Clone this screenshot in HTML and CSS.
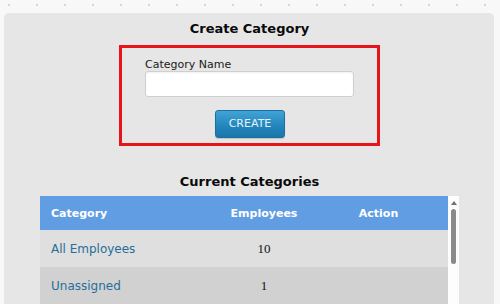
FILE: index.html
```html
<!DOCTYPE html>
<html lang="en">
<head>
<meta charset="utf-8">
<title>Create Category</title>
<link rel="stylesheet" href="styles.css">
</head>
<body>
<div class="dots"></div>
<div class="panel">
  <h2 class="title">Create Category</h2>
  <div class="form-box">
    <label class="label" for="catname">Category Name</label>
    <input class="input" id="catname" type="text">
    <div class="actions"><button class="btn" type="button">CREATE</button></div>
  </div>
  <h2 class="title sub">Current Categories</h2>
  <div class="list">
    <table class="table">
      <colgroup><col class="c1"><col class="c2"><col class="c3"></colgroup>
      <thead>
        <tr><th class="left">Category</th><th>Employees</th><th>Action</th></tr>
      </thead>
      <tbody>
        <tr class="odd"><td class="left"><a class="link" href="#">All Employees</a></td><td class="num">10</td><td></td></tr>
        <tr class="even"><td class="left"><a class="link" href="#">Unassigned</a></td><td class="num">1</td><td></td></tr>
      </tbody>
    </table>
    <div class="scrollbar">
      <div class="arrow"></div>
      <div class="thumb"></div>
    </div>
  </div>
</div>
</body>
</html>
```
FILE: styles.css
```css
html, body {
  margin: 0;
  padding: 0;
  height: 304px;
  overflow: hidden;
}
body {
  background: #f8f8f8;
  font-family: "DejaVu Sans", Verdana, sans-serif;
  color: #111;
}
.dots {
  height: 13px;
  background-image: radial-gradient(circle, #d6d6d6 0.9px, transparent 1.6px);
  background-size: 28px 10px;
  background-position: -5px 0;
  background-repeat: repeat-x;
}
.panel {
  margin-left: 4px;
  width: 490px;
  height: 291px;
  box-sizing: border-box;
  background: #e6e6e6;
  border-radius: 5px 5px 0 0;
  padding: 8px 35px 0 36px;
  overflow: hidden;
}
.title {
  margin: 0;
  font-size: 13px;
  line-height: 16px;
  font-weight: bold;
  text-align: center;
  color: #0a0a0a;
}
.form-box {
  margin: 8px auto 0;
  width: 261px;
  box-sizing: border-box;
  border: 3px solid #e8141b;
  padding: 10px 23px 5px;
}
.label {
  display: block;
  font-size: 11px;
  line-height: 13px;
  color: #1a1a1a;
}
.input {
  display: block;
  width: 100%;
  height: 26px;
  box-sizing: border-box;
  margin: 0;
  border: 1px solid #cfcfcf;
  border-radius: 3px;
  background: #fff;
  box-shadow: inset 0 1px 2px rgba(0,0,0,0.06);
}
.actions {
  display: flex;
  justify-content: center;
  margin-top: 13px;
}
.btn {
  width: 70px;
  height: 28px;
  padding: 0;
  margin-left: 1px;
  border: 1px solid #1c6f9f;
  border-radius: 3px;
  background: linear-gradient(#42a3d6, #2184bb 60%, #1b76aa);
  color: #e4f2fa;
  font-family: "DejaVu Sans", Verdana, sans-serif;
  font-size: 11px;
  line-height: 26px;
  box-shadow: 0 1px 1px rgba(0,0,0,0.15);
}
.sub {
  margin-top: 28px;
}
.list {
  display: flex;
  align-items: flex-start;
  margin-top: 6px;
}
.table {
  width: 408px;
  border-collapse: collapse;
  table-layout: fixed;
}
.c1 { width: 179px; }
.c2 { width: 90px; }
.c3 { width: 139px; }
.table th {
  background: #619de3;
  color: #fff;
  font-size: 11px;
  font-weight: bold;
  height: 34px;
  padding: 0;
  text-align: center;
}
.table td {
  height: 35px;
  padding: 1px 0;
  line-height: 16px;
  text-align: center;
}
.table .left {
  text-align: left;
  padding-left: 11px;
}
.odd { background: #e0dfdf; }
.even { background: #d1d1d1; }
.link {
  color: #266e99;
  text-decoration: none;
  font-size: 12px;
}
.num {
  font-family: "Liberation Serif", "Times New Roman", serif;
  font-size: 13px;
  color: #111;
}
.scrollbar {
  width: 11px;
  height: 120px;
  background: #fdfdfd;
  display: flex;
  flex-direction: column;
  align-items: center;
  padding-top: 5px;
  box-sizing: border-box;
}
.arrow {
  width: 0;
  height: 0;
  border-left: 3px solid transparent;
  border-right: 3px solid transparent;
  border-bottom: 4px solid #707070;
}
.thumb {
  margin-top: 4px;
  width: 5px;
  height: 55px;
  border-radius: 3px;
  background: #8a8a8a;
}
```
